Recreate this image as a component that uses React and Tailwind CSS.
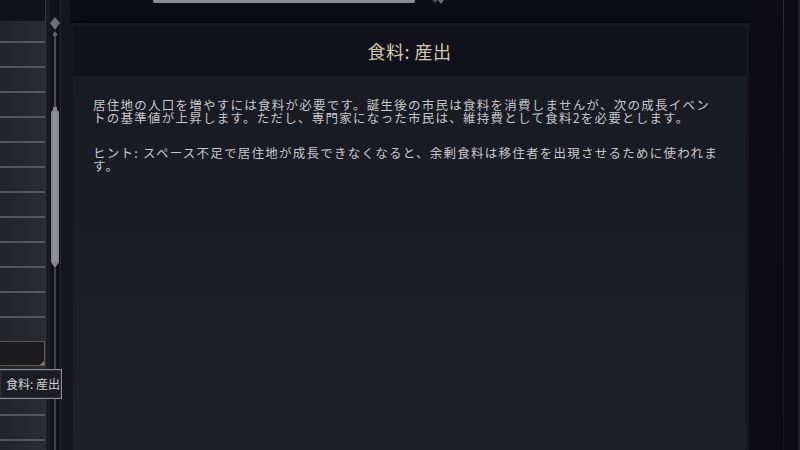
import React from 'react';

const FONT = '"Noto Sans CJK JP", "Noto Sans", sans-serif';

// list rows on the left: line = bottom rule, sel = highlighted row
const rows = [
  { h: 'h-[22px]', line: true },
  ...Array.from({ length: 11 }, () => ({ h: 'h-[25px]', line: true })),
  { h: 'h-[23px]', line: false },
  { h: 'h-[25px]', sel: true },
  { h: 'h-[25px]', line: false },
  { h: 'h-[25px]', line: true },
  { h: 'h-[25px]', line: true },
  { h: 'h-[25px]', line: true },
];

const ScrollBar = () => (
  <div className="w-[10px] flex flex-col items-center">
    <svg width="10" height="38" viewBox="0 0 10 38" className="shrink-0">
      <path d="M5 17 L10 23 L5 30 L0 23 Z" fill="#6c6f77" />
      <path d="M5 31 L7.5 34.5 L5 38 L2.5 34.5 Z" fill="#60636b" />
    </svg>
    <div className="w-[2px] h-[69px] bg-[#4b4d55]" />
    <svg width="10" height="161" viewBox="0 0 10 161" className="shrink-0">
      <path d="M3 0 H7 V3 L9 5 V155 L5 161 L1 155 V5 L3 3 Z" fill="#858891" />
      <path d="M3 5 H7 V154 H3 Z" fill="#8f929a" />
    </svg>
    <div className="w-[2px] flex-1 bg-[#3e4048]" />
  </div>
);

const ListColumn = () => (
  <div className="relative w-[70px] h-full flex bg-[#121219]">
    <div className="w-[46px] pt-[21px] border-r border-[#34353c]">
      {rows.map((r, i) =>
        r.sel ? (
          <div
            key={i}
            className={`relative ${r.h} bg-[#1b1b20] border border-l-0 border-[#5c5749]`}
          >
            <div className="absolute right-0 bottom-0 w-0 h-0 border-l-[4px] border-l-transparent border-b-[4px] border-b-[#8a7c5c]" />
          </div>
        ) : (
          <div
            key={i}
            className={`${r.h} bg-gradient-to-r from-[#232429] to-[#2b2c32] ${
              r.line ? 'border-b-2 border-[#54565d]' : ''
            }`}
          />
        )
      )}
    </div>
    <div className="w-[4px] bg-[#19191f]" />
    <ScrollBar />
    <div className="w-[10px] bg-[#15151b] border-l border-[#24252b]" />

    {/* hover tooltip over the list */}
    <div
      className="absolute left-0 top-[369px] w-[62px] h-[30px] flex items-center pl-[6px] bg-[#1c1d23] border border-l-0 border-[#8b8d93] text-[12px] text-[#d2d2d2] shadow-[inset_0_0_0_1px_#2e3038]"
      style={{ fontFamily: FONT }}
    >
      食料: 産出
    </div>
  </div>
);

export default function App() {
  return (
    <div
      className="w-[800px] h-[450px] flex overflow-hidden bg-[#0e0e16]"
      style={{ fontFamily: FONT }}
    >
      <ListColumn />

      <div className="w-[679px] h-full flex flex-col">
        {/* strip above the panel with the bottom of the tab bar */}
        <div className="h-[23px] shrink-0 flex items-start pl-[83px] bg-[#0d0d15] border-b-2 border-[#09090f]">
          <div className="w-[262px] h-[3px] bg-[#8b8e96] rounded-b-[2px]" />
          <svg width="16" height="6" viewBox="0 0 16 6" className="ml-[15px]">
            <path d="M2 0 L5 3 L8 0 Z" fill="#4c4e56" />
            <path d="M8 0 L11 4 L14 0 Z" fill="#6a6d75" />
          </svg>
        </div>

        <div className="flex-1 flex flex-col p-[3px] pb-0 bg-[#15161e] shadow-[4px_0_10px_rgba(0,0,0,0.6)]">
          <div className="h-[50px] shrink-0 flex items-center justify-center bg-[#10111a] text-[18px] text-[#d5c8a7] tracking-[0.5px]">
            食料: 産出
          </div>
          <div className="flex-1 bg-gradient-to-b from-[#191b23] to-[#1e1f24] pl-[20px] pt-[22px]">
            <div className="w-[629px] text-[12.5px] tracking-[1.25px] leading-[13px] text-[#c6c7c9]">
              <p>
                居住地の人口を増やすには食料が必要です。誕生後の市民は食料を消費しませんが、次の成長イベントの基準値が上昇します。ただし、専門家になった市民は、維持費として食料2を必要とします。
              </p>
              <p className="mt-[22px]">
                ヒント: スペース不足で居住地が成長できなくなると、余剰食料は移住者を出現させるために使われます。
              </p>
            </div>
          </div>
        </div>
      </div>

      <div className="flex-1 h-full flex bg-[#0d0c14] border-r-2 border-[#221f1d]">
        <div className="w-[34px]" />
        <div className="w-[1px] h-full bg-gradient-to-b from-[#2a2a34] to-[#15151d]" />
      </div>
    </div>
  );
}
